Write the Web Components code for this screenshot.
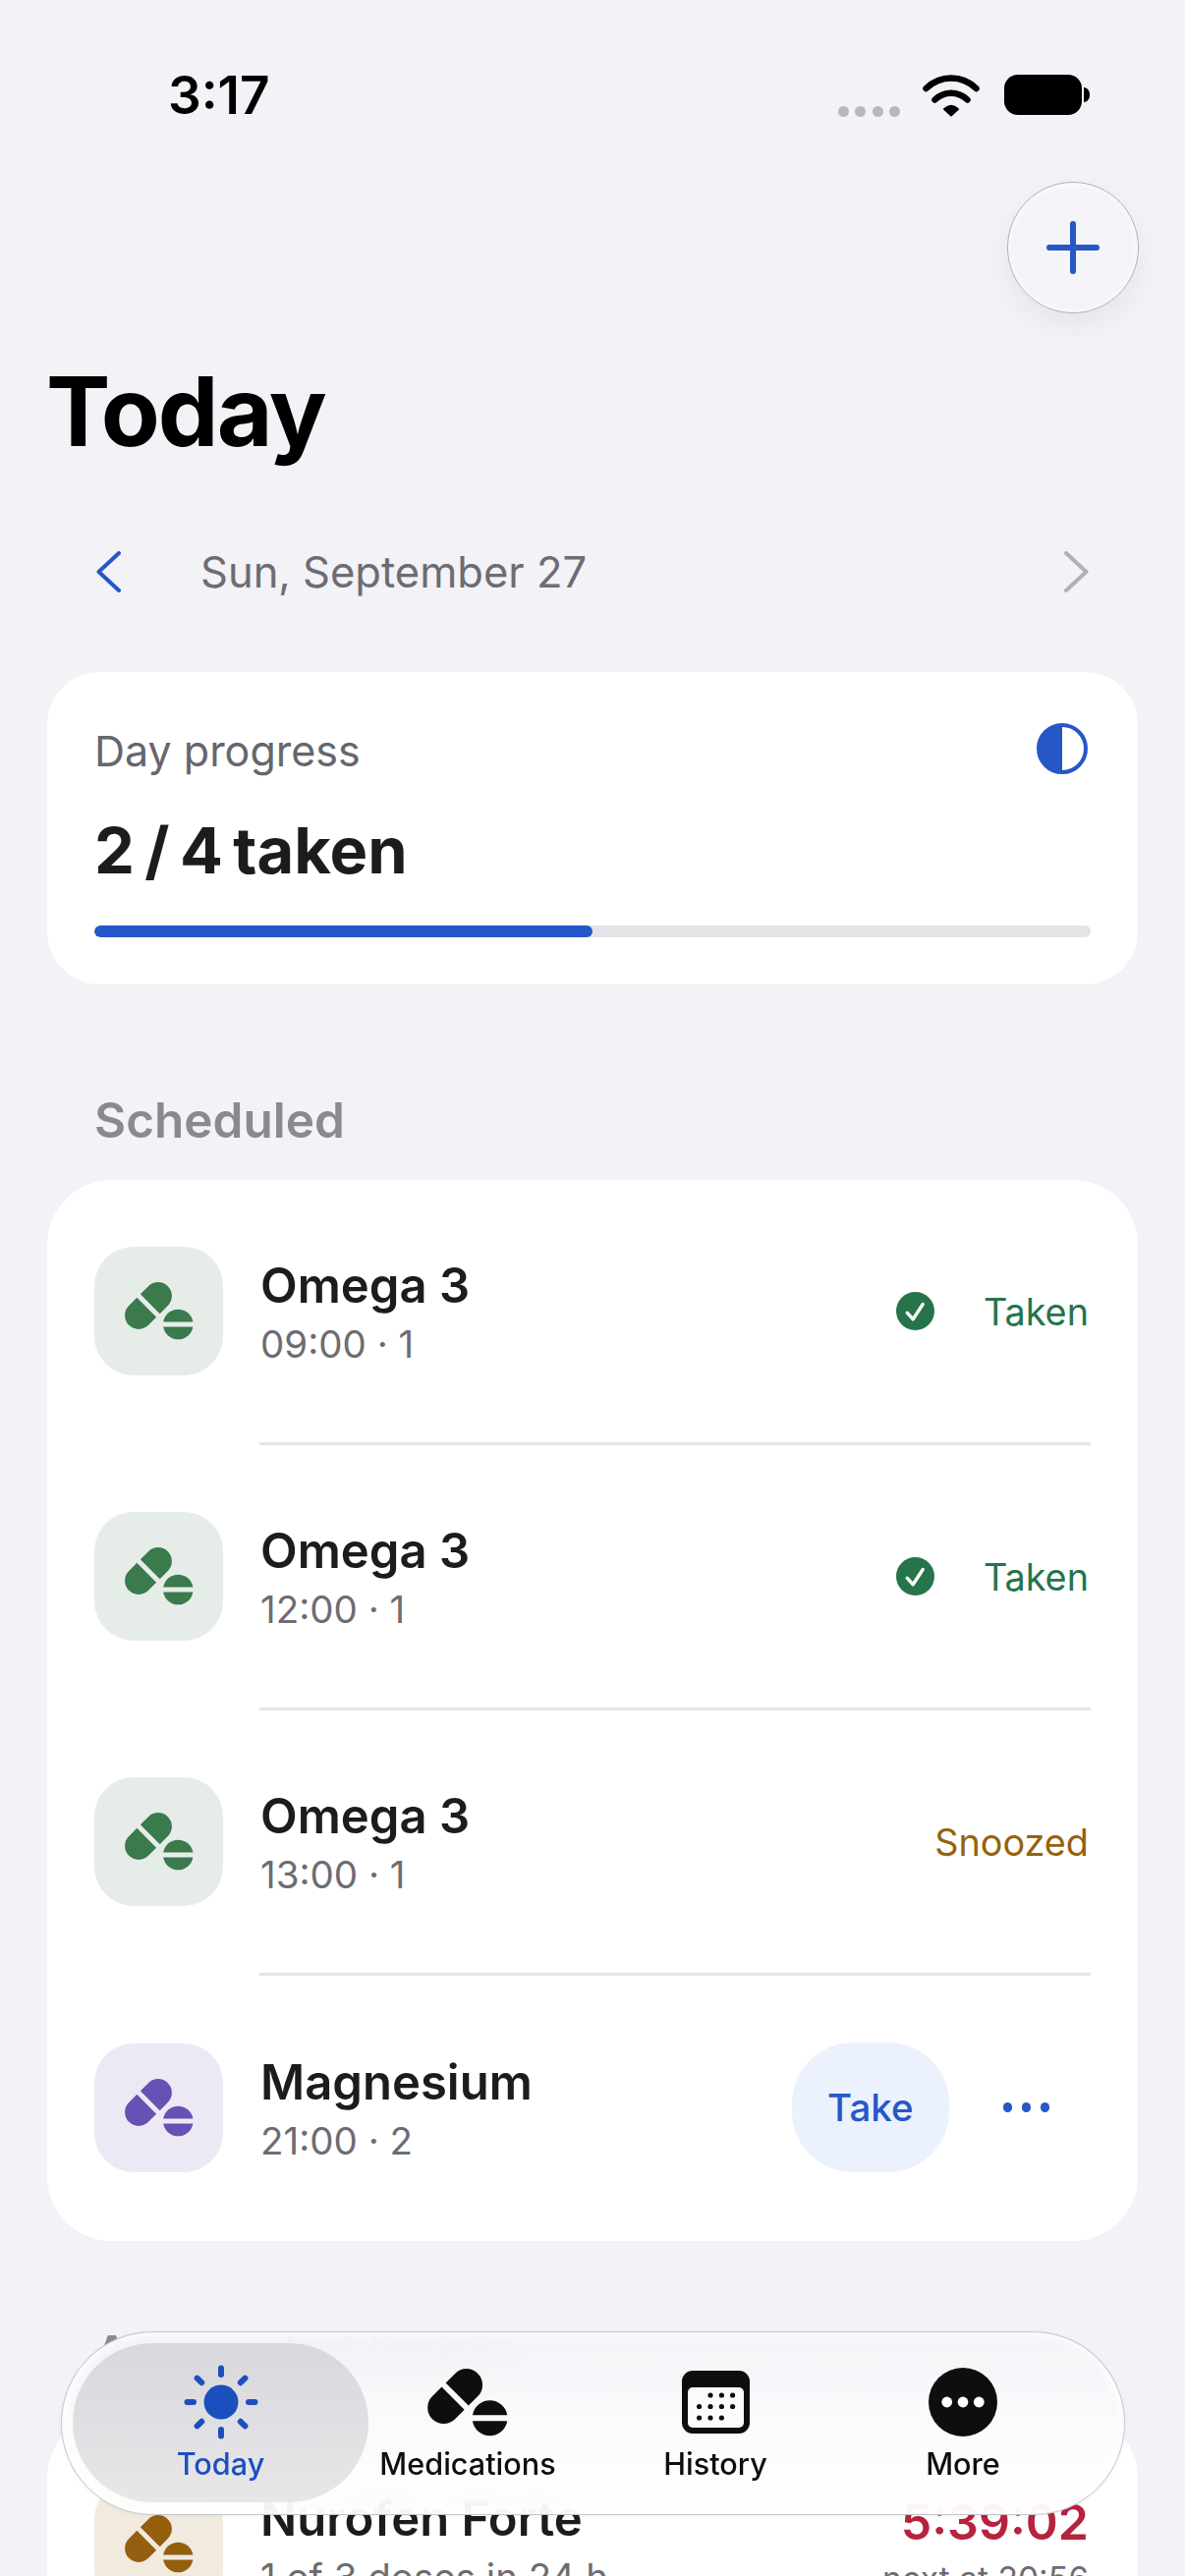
<!DOCTYPE html>
<html lang="en">
<head>
<meta charset="utf-8">
<title>Today</title>
<style>
  html, body { margin: 0; height: 2622px; overflow: hidden; background: #f2f2f7; }
  body { font-family: Inter, "Liberation Sans", sans-serif; color: #1c1c1e; }
</style>
</head>
<body>
<app-shell>
  <status-bar time="3:17"></status-bar>
  <today-header title="Today" date="Sun, September 27"></today-header>
  <progress-card label="Day progress" value="2 / 4 taken" percent="50"></progress-card>

  <section-title gap="108">Scheduled</section-title>
  <med-card>
    <med-row name="Omega 3" detail="09:00 · 1" tone="green"><status-label kind="taken">Taken</status-label></med-row>
    <med-row name="Omega 3" detail="12:00 · 1" tone="green"><status-label kind="taken">Taken</status-label></med-row>
    <med-row name="Omega 3" detail="13:00 · 1" tone="green"><status-label kind="snoozed">Snoozed</status-label></med-row>
    <med-row name="Magnesium" detail="21:00 · 2" tone="purple" last><take-actions></take-actions></med-row>
  </med-card>

  <section-title gap="84">As-needed limits</section-title>
  <med-card>
    <med-row name="Nurofen Forte" detail="1 of 3 doses in 24 h" tone="brown" last><cooldown-label time="5:39:02" next="next at 20:56"></cooldown-label></med-row>
  </med-card>

  <tab-bar>
    <tab-item icon="sun" active>Today</tab-item>
    <tab-item icon="pills">Medications</tab-item>
    <tab-item icon="calendar">History</tab-item>
    <tab-item icon="more">More</tab-item>
  </tab-bar>
</app-shell>

<script>
const pillsSvg = (width, height) => `
  <svg width="${width}" height="${height}" viewBox="0 0 70 59" fill="currentColor" aria-hidden="true">
    <g transform="translate(24 24) rotate(-45)">
      <path d="M-2.5 -14H-14A14 14 0 0 0 -14 14H-2.5Z"/>
      <path d="M2.5 -14H14A14 14 0 0 1 14 14H2.5Z"/>
    </g>
    <g transform="translate(54.3 43)">
      <path d="M-15.1 -2.5A15.3 15.3 0 0 1 15.1 -2.5Z"/>
      <path d="M-15.1 2.5A15.3 15.3 0 0 0 15.1 2.5Z"/>
    </g>
  </svg>`;

const sunRays = [0, 45, 90, 135, 180, 225, 270, 315]
  .map((deg) => `<line x1="0" y1="-28" x2="0" y2="-34.5" transform="rotate(${deg})"/>`)
  .join("");

const tabIcons = {
  sun: `
    <svg width="76" height="76" viewBox="-38 -38 76 76" fill="#1c4fbe" stroke="#1c4fbe" aria-hidden="true">
      <circle r="17.5" stroke="none"/>
      <g stroke-width="6" stroke-linecap="round">${sunRays}</g>
    </svg>`,
  pills: pillsSvg(82, 69),
  calendar: `
    <svg width="69" height="64" viewBox="0 0 69 64" aria-hidden="true">
      <rect width="69" height="64" rx="11" fill="#0e0e0e"/>
      <rect x="6" y="17" width="57" height="41" rx="5" fill="#fbfbfc"/>
      <g fill="#0e0e0e">
        <circle cx="29" cy="25" r="2.6"/><circle cx="40.4" cy="25" r="2.6"/><circle cx="51.6" cy="25" r="2.6"/>
        <circle cx="17.6" cy="36.5" r="2.6"/><circle cx="29" cy="36.5" r="2.6"/><circle cx="40.4" cy="36.5" r="2.6"/><circle cx="51.6" cy="36.5" r="2.6"/>
        <circle cx="17.6" cy="48" r="2.6"/><circle cx="29" cy="48" r="2.6"/><circle cx="40.4" cy="48" r="2.6"/>
      </g>
    </svg>`,
  more: `
    <svg width="70" height="70" viewBox="-35 -35 70 70" aria-hidden="true">
      <circle r="35" fill="#0e0e0e"/>
      <g fill="#fff"><circle cx="-16.3" r="5.4"/><circle r="5.4"/><circle cx="16.3" r="5.4"/></g>
    </svg>`
};

const tones = {
  green: { bg: "#e6ece8", fg: "#3a7a4c" },
  purple: { bg: "#ece9f5", fg: "#6652b4" },
  brown: { bg: "#f1eadf", fg: "#945f0e" }
};

class BaseElement extends HTMLElement {
  constructor() {
    super();
    this.attachShadow({ mode: "open" });
  }

  connectedCallback() {
    this.shadowRoot.innerHTML = `<style>${this.styles()}</style>${this.markup()}`;
  }

  styles() {
    return ":host { display: block; }";
  }

  markup() {
    return "<slot></slot>";
  }
}

class AppShell extends BaseElement {
  styles() {
    return `
      :host { display: block; position: relative; height: 2622px; overflow: hidden; padding: 0 48px; box-sizing: border-box; }
    `;
  }
}

class StatusBar extends BaseElement {
  styles() {
    return `
      :host { display: flex; align-items: flex-start; height: 170px; margin: 0 -48px; padding: 64px 97px 0 171px; box-sizing: border-box; }
      .time { margin-top: 2px; font-size: 53px; line-height: 62px; font-weight: 600; color: #000; }
      .icons { margin-left: auto; display: flex; align-items: flex-start; padding-top: 12px; }
      .dots { display: flex; gap: 6.3px; margin: 32px 23px 0 0; }
      .dots span { width: 11px; height: 11px; border-radius: 50%; background: #b8b7bc; }
      .wifi { margin-right: 25px; }
    `;
  }

  markup() {
    return `
      <span class="time">${this.getAttribute("time")}</span>
      <div class="icons">
        <div class="dots"><span></span><span></span><span></span><span></span></div>
        <svg class="wifi" width="58" height="44" viewBox="0 0 58 44" fill="none" stroke="#000" stroke-linecap="round" aria-hidden="true">
          <path d="M3.5 14C18 0 40 0 54.5 14" stroke-width="6.5"/>
          <path d="M12.5 25.5C22 16.5 36 16.5 45.5 25.5" stroke-width="6.5"/>
          <path d="M22 35Q29 28.5 36 35L29 41.5Z" fill="#000" stroke-width="2" stroke-linejoin="round"/>
        </svg>
        <svg width="87" height="41" viewBox="0 0 87 41" aria-hidden="true">
          <rect width="79" height="41" rx="14"/>
          <path d="M81 13C85 13 87 17 87 20.5C87 24 85 28 81 28Z"/>
        </svg>
      </div>
    `;
  }
}

class TodayHeader extends BaseElement {
  styles() {
    return `
      :host { display: block; }
      .actions { display: flex; justify-content: flex-end; margin: 15px -1px 0 0; }
      .add { width: 134px; height: 134px; box-sizing: border-box; display: flex; align-items: center; justify-content: center; border-radius: 50%; border: 1.5px solid #b2b2b6;
        background: radial-gradient(circle at 50% 60%, #f4f4f9 0%, #f3f3f8 60%, #f8f8fb 100%);
        box-shadow: 0 12px 30px rgba(0, 0, 0, .06), inset 0 0 8px #fff; }
      h1 { margin: 40px 0 0 -1px; font-size: 98px; line-height: 120px; font-weight: 700; color: #000; letter-spacing: -2px; }
      .date { display: flex; align-items: center; height: 80px; margin: 63px 50px 0 50px; }
      .date span { margin-left: 81px; font-size: 43.5px; line-height: 50px; color: #6c6c73; }
      .date svg:last-child { margin-left: auto; }
    `;
  }

  markup() {
    return `
      <div class="actions">
        <div class="add">
          <svg width="54" height="54" viewBox="0 0 54 54" stroke="#2557c7" stroke-width="6" stroke-linecap="round" aria-hidden="true">
            <path d="M27 3V51M3 27H51"/>
          </svg>
        </div>
      </div>
      <h1>${this.getAttribute("title")}</h1>
      <div class="date">
        <svg width="25" height="42" viewBox="0 0 25 42" fill="none" stroke="#2557c7" stroke-width="4" stroke-linecap="round" stroke-linejoin="round" aria-hidden="true"><path d="M23 2L2.5 21L23 40"/></svg>
        <span>${this.getAttribute("date")}</span>
        <svg width="25" height="42" viewBox="0 0 25 42" fill="none" stroke="#b0b0b5" stroke-width="4" stroke-linecap="round" stroke-linejoin="round" aria-hidden="true"><path d="M2 2L22.5 21L2 40"/></svg>
      </div>
    `;
  }
}

class ProgressCard extends BaseElement {
  styles() {
    return `
      :host { display: block; margin-top: 62px; height: 318px; box-sizing: border-box; padding: 55px 48px 0; background: #fff; border-radius: 54px; }
      .top { display: flex; justify-content: space-between; align-items: flex-start; height: 50px; }
      .label { font-size: 43px; line-height: 50px; color: #66666d; }
      .top svg { margin: -3px 3px 0 0; }
      .value { margin: 37px 0 0 0; font-size: 65px; line-height: 80px; font-weight: 700; color: #1c1c1e; word-spacing: -5px; }
      .track { margin-top: 36px; height: 12px; border-radius: 6px; background: #e4e4e6; overflow: hidden; }
      .fill { height: 100%; border-radius: 6px; background: #2557c7; }
    `;
  }

  markup() {
    return `
      <div class="top">
        <span class="label">${this.getAttribute("label")}</span>
        <svg width="52" height="52" viewBox="-26 -26 52 52" aria-hidden="true">
          <circle r="24" fill="#fff" stroke="#2557c7" stroke-width="4"/>
          <path d="M0 -25A25 25 0 0 0 0 25Z" fill="#2557c7"/>
        </svg>
      </div>
      <div class="value">${this.getAttribute("value")}</div>
      <div class="track"><div class="fill" style="width:${this.getAttribute("percent")}%"></div></div>
    `;
  }
}

class SectionTitle extends BaseElement {
  styles() {
    return `
      :host { display: block; margin: ${this.getAttribute("gap")}px 0 31px 48px; font-size: 49.5px; line-height: 60px; font-weight: 600; color: #8a8a8e; white-space: nowrap; }
    `;
  }
}

class MedCard extends BaseElement {
  styles() {
    return `
      :host { display: block; background: #fff; border-radius: 66px; padding-bottom: 2px; }
    `;
  }
}

class MedRow extends BaseElement {
  styles() {
    const last = this.hasAttribute("last");
    return `
      :host { display: block; }
      .row { display: flex; align-items: center; padding: 68px 48px 68px 48px; }
      .tile { flex: none; width: 131px; height: 131px; border-radius: 40px; display: flex; align-items: center; justify-content: center; }
      .text { flex: 1; min-width: 0; margin-left: 38px; padding-top: 2px; }
      .name { font-size: 49px; line-height: 60px; font-weight: 600; color: #1c1c1e; white-space: nowrap; }
      .detail { margin-top: 5px; font-size: 38.5px; line-height: 48px; color: #6c6c73; white-space: nowrap; }
      .line { height: 3px; margin: 0 48px 0 216px; background: #e6e6e8; display: ${last ? "none" : "block"}; }
    `;
  }

  markup() {
    const tone = tones[this.getAttribute("tone")];
    return `
      <div class="row">
        <div class="tile" style="background:${tone.bg};color:${tone.fg}">${pillsSvg(70, 59)}</div>
        <div class="text">
          <div class="name">${this.getAttribute("name")}</div>
          <div class="detail">${this.getAttribute("detail")}</div>
        </div>
        <slot></slot>
      </div>
      <div class="line"></div>
    `;
  }
}

class StatusLabel extends BaseElement {
  styles() {
    const taken = this.getAttribute("kind") === "taken";
    return `
      :host { display: flex; align-items: center; gap: 50px; margin-right: 2px; font-size: 37.8px; line-height: 48px; color: ${taken ? "#25744a" : "#96620c"}; }
    `;
  }

  markup() {
    const check = `
      <svg width="39" height="39" viewBox="-19.5 -19.5 39 39" aria-hidden="true">
        <circle r="19.5" fill="#25744a"/>
        <path d="M-8.3 1.7L-2.3 8.3L7.7 -7" fill="none" stroke="#fff" stroke-width="3.4" stroke-linecap="round" stroke-linejoin="round"/>
      </svg>`;
    return `${this.getAttribute("kind") === "taken" ? check : ""}<slot></slot>`;
  }
}

class TakeActions extends BaseElement {
  styles() {
    return `
      :host { display: flex; align-items: center; margin-right: 42px; }
      .take { width: 160px; height: 132px; display: flex; align-items: center; justify-content: center; border-radius: 62px; background: #ebf1fd; color: #2558c8; font-size: 38.5px; line-height: 48px; font-weight: 500; }
      .dots { display: flex; gap: 9.5px; margin-left: 55px; }
      .dots span { width: 9.4px; height: 9.4px; border-radius: 50%; background: #2558c8; }
    `;
  }

  markup() {
    return `
      <div class="take">Take</div>
      <div class="dots"><span></span><span></span><span></span></div>
    `;
  }
}

class CooldownLabel extends BaseElement {
  styles() {
    return `
      :host { display: block; text-align: right; margin-right: 2px; white-space: nowrap; padding-top: 4px; }
      .time { font-size: 50px; line-height: 62px; font-weight: 600; color: #b5233f; }
      .next { margin-top: 4px; font-size: 33.6px; line-height: 46px; color: #6c6c73; }
    `;
  }

  markup() {
    return `
      <div class="time">${this.getAttribute("time")}</div>
      <div class="next">${this.getAttribute("next")}</div>
    `;
  }
}

class TabBar extends BaseElement {
  styles() {
    return `
      :host { position: absolute; left: 62px; top: 2373px; width: 1083px; height: 187px; box-sizing: border-box; padding: 11px 36px; display: flex; border-radius: 94px;
        border: 1.5px solid rgba(165, 165, 170, .6);
        background: linear-gradient(rgba(244, 244, 248, .95), rgba(250, 250, 252, .9) 45%, rgba(255, 255, 255, .86));
        backdrop-filter: blur(22px);
        box-shadow: inset 0 0 6px 3px rgba(255, 255, 255, .75), 0 1px 4px rgba(0, 0, 0, .05); }
    `;
  }
}

class TabItem extends BaseElement {
  styles() {
    const active = this.hasAttribute("active");
    return `
      :host { display: flex; flex-direction: column; align-items: center; flex: none; box-sizing: border-box; height: 162px; padding-top: 20px;
        width: ${active ? 301 : 252}px; margin: 0 ${active ? "-25px" : "0"}; border-radius: 81px;
        background: ${active ? "linear-gradient(#d8d8dd, #e7e7e9)" : "none"};
        color: ${active ? "#1c4fbe" : "#0e0e0e"}; }
      .icon { height: 80px; display: flex; align-items: center; justify-content: center; }
      .label { margin-top: 3px; font-size: 30.6px; line-height: 40px; font-weight: 500; white-space: nowrap; }
    `;
  }

  markup() {
    return `
      <div class="icon">${tabIcons[this.getAttribute("icon")]}</div>
      <div class="label"><slot></slot></div>
    `;
  }
}

customElements.define("app-shell", AppShell);
customElements.define("status-bar", StatusBar);
customElements.define("today-header", TodayHeader);
customElements.define("progress-card", ProgressCard);
customElements.define("section-title", SectionTitle);
customElements.define("med-card", MedCard);
customElements.define("med-row", MedRow);
customElements.define("status-label", StatusLabel);
customElements.define("take-actions", TakeActions);
customElements.define("cooldown-label", CooldownLabel);
customElements.define("tab-bar", TabBar);
customElements.define("tab-item", TabItem);
</script>
</body>
</html>
